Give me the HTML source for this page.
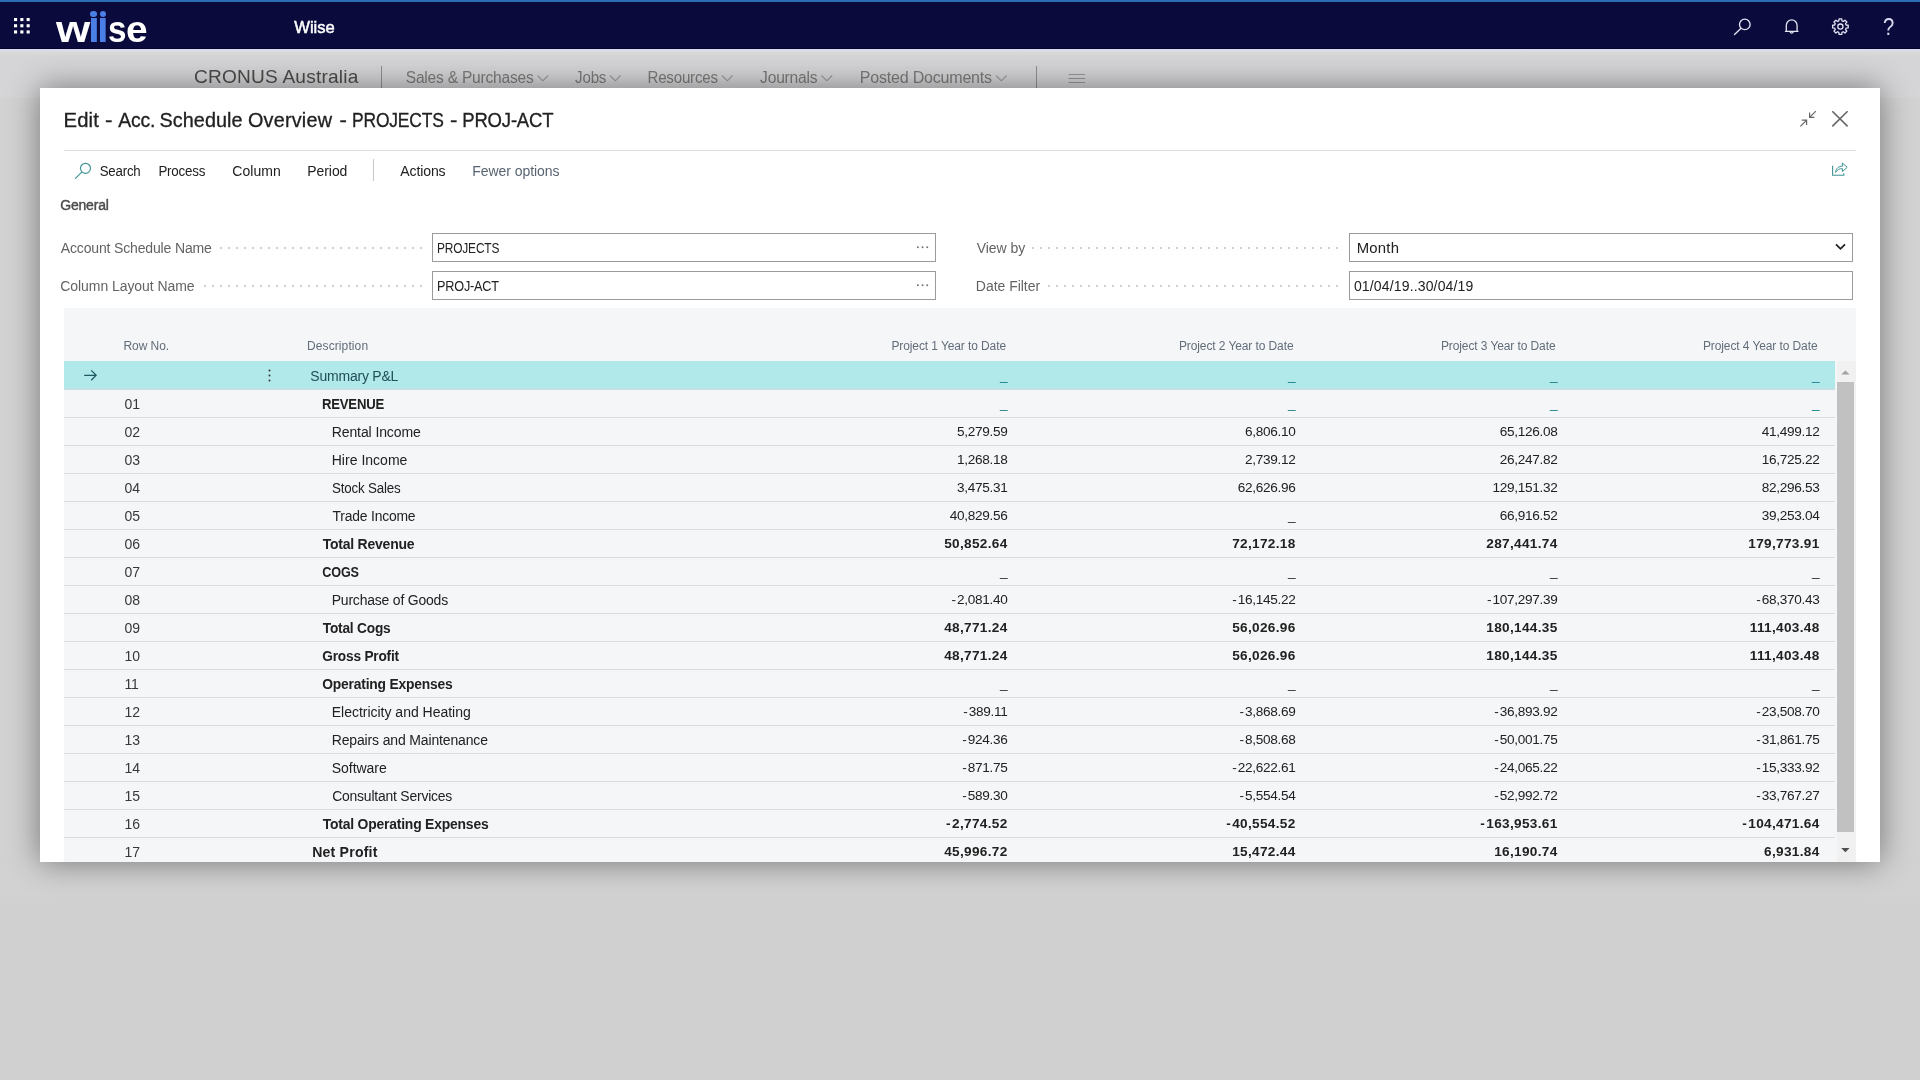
<!DOCTYPE html>
<html lang="en">
<head>
<meta charset="utf-8">
<title>Edit - Acc. Schedule Overview - PROJECTS - PROJ-ACT</title>
<style>
html,body{margin:0;padding:0;}
body{width:1920px;height:1080px;overflow:hidden;position:relative;background:#d0d0d0;font-family:"Liberation Sans",sans-serif;}
.t,.n{position:absolute;white-space:pre;line-height:1;transform-origin:0 0;font-family:"Liberation Sans",sans-serif;}
.n{font-size:13.6px;color:#212121;letter-spacing:-0.3px;text-align:right;}
.n.b{font-weight:700;letter-spacing:0.33px;}
.n.u{letter-spacing:0;}
.rn{left:124.6px;font-size:14px;color:#383838;letter-spacing:-0.25px;}
.n .h{letter-spacing:1.1px;}
.n.b .h{letter-spacing:1.4px;}
#topline{position:absolute;left:0;top:0;width:1920px;height:2px;background:#2c6db3;}
#topbar{position:absolute;left:0;top:2px;width:1920px;height:46px;background:#0a0a3c;}
#topbar-edge{position:absolute;left:0;top:48px;width:1920px;height:7px;background:linear-gradient(#03032b 0,#03032b 1px,#dadaea 1px,#dadaea 4px,#d9d9d5 4px,#d8d8d5 7px);}
#navbg{position:absolute;left:0;top:55px;width:1920px;height:43px;background:#d5d4d6;}
#chrome{position:absolute;left:0;top:0;width:1920px;height:100px;will-change:transform;}
#midbg{position:absolute;left:0;top:98px;width:1920px;height:799px;background:#d2d2d2;}
#logo span{position:absolute;top:11px;font-size:37px;font-weight:700;line-height:1;color:#fff;white-space:pre;transform-origin:0 0;}
#logo .lw{left:56px;transform:scaleX(1.19);}
#logo .li{left:88.1px;color:#4a7fe6;letter-spacing:-2.55px;transform:scale(1.15,1.185);transform-origin:0 31px;clip-path:inset(8.7px 0 0 0);}
#logo .ls{left:107.6px;transform:scaleX(.9);}
#logo .le{left:125.6px;transform:scaleX(1.05);}
#logo b{position:absolute;width:6.2px;height:6.2px;border-radius:50%;background:#4a7fe6;top:10.7px;}
.vsep{position:absolute;width:1px;background:#8f8f8f;}
svg{position:absolute;overflow:visible;}
#dialog{position:absolute;left:40px;top:88px;width:1840px;height:774px;background:#fff;box-shadow:0 0 30px rgba(0,0,0,.45);}
#clip{position:absolute;left:0;top:0;width:1840px;height:774px;overflow:hidden;}
#inner{will-change:transform;position:absolute;left:-40px;top:-88px;width:1920px;height:1080px;}
#divider{position:absolute;left:64px;top:150px;width:1792px;height:1px;background:#dcdcdc;}
.input{position:absolute;box-sizing:border-box;height:29px;width:504px;border:1px solid #9b9b9b;background:#fff;}
.dots{position:absolute;height:2px;background-image:radial-gradient(circle at 1px 1px,#d0d0d0 0.85px,rgba(208,208,208,0) 1.3px);background-size:8px 2px;background-repeat:repeat-x;background-position:left top;}
#grid{position:absolute;left:64px;top:308px;width:1792px;height:560px;background:#f5f6f8;}
.row{position:absolute;left:64px;width:1771px;height:29px;box-sizing:border-box;border-bottom:1px solid #d9dcde;}
.row.sel{background:#b1e8ea;border-bottom:2px solid #c4e0e4;}
#sbtrack{position:absolute;left:1837px;top:361px;width:19px;height:501px;background:#f1f1f1;}
#sbthumb{position:absolute;left:1837px;top:382px;width:17px;height:450px;background:#c1c1c1;}
</style>
</head>
<body>
<div id="topline"></div>
<div id="topbar"></div>
<div id="topbar-edge"></div>
<div id="navbg"></div>
<div id="midbg"></div>

<div id="chrome">
<!-- app launcher -->
<svg style="left:14px;top:18.4px" width="16" height="16" viewBox="0 0 16 16" fill="#fff">
<rect x="0" y="0" width="3.1" height="3.1"/><rect x="6.3" y="0" width="3.1" height="3.1"/><rect x="12.6" y="0" width="3.1" height="3.1"/>
<rect x="0" y="6.2" width="3.1" height="3.1"/><rect x="6.3" y="6.2" width="3.1" height="3.1"/><rect x="12.6" y="6.2" width="3.1" height="3.1"/>
<rect x="0" y="12.4" width="3.1" height="3.1"/><rect x="6.3" y="12.4" width="3.1" height="3.1"/><rect x="12.6" y="12.4" width="3.1" height="3.1"/>
</svg>
<div id="logo"><span class="lw">w</span><span class="li">ii</span><span class="ls">s</span><span class="le">e</span><b style="left:90.4px"></b><b style="left:99.6px"></b></div>

<!-- top-right icons -->
<svg style="left:0;top:0" width="1920" height="50" viewBox="0 0 1920 50" fill="none" stroke="#e4e4f4" stroke-width="1.35" stroke-linecap="round" stroke-linejoin="round">
<circle cx="1744.8" cy="24.4" r="5.3"/><path d="M1740.8 28.4 L1734.5 34.5"/>
<path d="M1786.3 31.2 V25.6 a5.4 5.7 0 0 1 10.8 0 V31.2 M1785.4 31.3 H1798 M1790.2 32 a1.6 1.6 0 0 0 3 0" stroke-width="1.3"/>
<circle cx="1840.4" cy="26.6" r="2.6" stroke-width="1.3"/>
<path stroke-width="1.3" d="M1846.09 25.03 L1848.19 25.26 L1848.19 27.94 L1846.09 28.17 L1845.53 29.51 L1846.85 31.16 L1844.96 33.05 L1843.31 31.73 L1841.97 32.29 L1841.74 34.39 L1839.06 34.39 L1838.83 32.29 L1837.49 31.73 L1835.84 33.05 L1833.95 31.16 L1835.27 29.51 L1834.71 28.17 L1832.61 27.94 L1832.61 25.26 L1834.71 25.03 L1835.27 23.69 L1833.95 22.04 L1835.84 20.15 L1837.49 21.47 L1838.83 20.91 L1839.06 18.81 L1841.74 18.81 L1841.97 20.91 L1843.31 21.47 L1844.96 20.15 L1846.85 22.04 L1845.53 23.69 Z"/>
</svg>
<span class="t" style="left:1883.4px;top:16px;font-size:23px;color:#dcdcf0;transform:scaleX(.88);transform-origin:0 0">?</span>

<span class="t" style="left:294px;top:19px;font-size:16.5px;color:#ffffff;letter-spacing:-0.032px;transform:translateX(0.26px) scaleX(1.0055);-webkit-text-stroke:0.5px #fff;">Wiise</span>
<span class="t" style="left:194px;top:68px;font-size:18.4px;color:#4c4c4c;letter-spacing:0.200px;transform:translateX(0.00px) scaleX(1.0380);">CRONUS Australia</span>
<span class="t" style="left:405px;top:70px;font-size:16px;color:#7b7b7b;letter-spacing:-0.200px;transform:translateX(0.73px) scaleX(0.9694);">Sales &amp; Purchases</span>
<span class="t" style="left:575px;top:70px;font-size:16px;color:#7b7b7b;letter-spacing:-0.200px;transform:translateX(0.10px) scaleX(0.9431);">Jobs</span>
<span class="t" style="left:647px;top:70px;font-size:16px;color:#7b7b7b;letter-spacing:-0.200px;transform:translateX(0.45px) scaleX(0.9426);">Resources</span>
<span class="t" style="left:760px;top:70px;font-size:16px;color:#7b7b7b;letter-spacing:-0.200px;transform:translateX(0.09px) scaleX(0.9737);">Journals</span>
<span class="t" style="left:859px;top:70px;font-size:16px;color:#7b7b7b;letter-spacing:-0.192px;transform:translateX(0.77px) scaleX(0.9999);">Posted Documents</span>
<div class="vsep" style="left:381px;top:66px;height:24px"></div>
<div class="vsep" style="left:1036px;top:66px;height:24px"></div>
<svg style="left:0;top:50px" width="1920" height="48" viewBox="0 50 1920 48" fill="none" stroke="#9a9a9a" stroke-width="1.1">
<path d="M537.5 75.5 l5.3 5.3 l5.3 -5.3 M610 75.5 l5.3 5.3 l5.3 -5.3 M722 75.5 l5.3 5.3 l5.3 -5.3 M821.5 75.5 l5.3 5.3 l5.3 -5.3 M996 75.5 l5.3 5.3 l5.3 -5.3"/>
<path d="M1068.5 74.5 h16.5 M1068.5 78.5 h16.5 M1068.5 82.5 h16.5" stroke="#969696" stroke-width="1"/>
</svg>

</div>
<div id="dialog"><div id="clip"><div id="inner">
<div id="divider"></div>
<div class="input" style="left:432px;top:233px"></div>
<div class="input" style="left:432px;top:271px"></div>
<div class="input" style="left:1349px;top:233px"></div>
<div class="input" style="left:1349px;top:271px"></div>

<div class="dots" style="left:219.9px;top:246.7px;width:202px"></div>
<div class="dots" style="left:204px;top:284.7px;width:218px"></div>
<div class="dots" style="left:1032.4px;top:246.7px;width:306px"></div>
<div class="dots" style="left:1048.4px;top:284.7px;width:290px"></div>
<!-- dialog window buttons -->
<svg style="left:0;top:0" width="1920" height="320" viewBox="0 0 1920 320" fill="none" stroke="#666" stroke-width="1.4">
<path d="M1832.3 111.2 L1847.6 126.4 M1847.6 111.2 L1832.3 126.4" stroke-width="1.6"/>
<path d="M1815.8 111.2 L1809.6 117.4 M1809.6 112.6 V117.4 H1814.4 M1800.4 126.4 L1806.6 120.2 M1806.6 125 V120.2 H1801.8" stroke-width="1.2"/>
<!-- share -->
<path d="M1832.6 165.8 V175.3 H1843.8 V173.2" stroke="#3f9394" stroke-width="1.1"/>
<path d="M1835.6 172.4 C1836 168 1839 166.2 1842.4 166.2 V163 L1847.2 167.4 L1842.4 171.6 V168.6 C1839.6 168.6 1837.4 169.4 1835.6 172.4 Z" stroke="#3f9394" stroke-width="1" stroke-linejoin="round"/>
<!-- action bar search -->
<circle cx="85.5" cy="168.3" r="5" stroke="#3f9394" stroke-width="1.15"/><path d="M81.7 172.1 L75.5 178.3" stroke="#3f9394" stroke-width="1.15" stroke-linecap="round"/>
<!-- lookups ... -->
<g fill="#707070" stroke="none"><rect x="917" y="246.4" width="1.7" height="1.7"/><rect x="921.7" y="246.4" width="1.7" height="1.7"/><rect x="926.4" y="246.4" width="1.7" height="1.7"/><rect x="917" y="284.4" width="1.7" height="1.7"/><rect x="921.7" y="284.4" width="1.7" height="1.7"/><rect x="926.4" y="284.4" width="1.7" height="1.7"/></g>
<!-- select chevron -->
<path d="M1836 244.3 L1840.5 248.8 L1845 244.3" stroke="#222" stroke-width="1.8"/>
</svg>
<div class="vsep" style="left:373px;top:159px;height:22px;background:#c8c8c8"></div>

<div id="grid"></div>
<div class="row sel" style="top:361px"></div>
<div class="row" style="top:389px"></div>
<div class="row" style="top:417px"></div>
<div class="row" style="top:445px"></div>
<div class="row" style="top:473px"></div>
<div class="row" style="top:501px"></div>
<div class="row" style="top:529px"></div>
<div class="row" style="top:557px"></div>
<div class="row" style="top:585px"></div>
<div class="row" style="top:613px"></div>
<div class="row" style="top:641px"></div>
<div class="row" style="top:669px"></div>
<div class="row" style="top:697px"></div>
<div class="row" style="top:725px"></div>
<div class="row" style="top:753px"></div>
<div class="row" style="top:781px"></div>
<div class="row" style="top:809px"></div>
<div class="row" style="top:837px"></div>
<div id="sbtrack"></div><div id="sbthumb"></div>
<svg style="left:0;top:360px" width="1920" height="510" viewBox="0 360 1920 510" stroke="none">
<path d="M1841.2 374.6 L1845.4 370.4 L1849.6 374.6 Z" fill="#a3a3a3"/>
<path d="M1841.2 848 L1845.4 852.2 L1849.6 848 Z" fill="#505050"/>
<!-- current row arrow -->
<path d="M84.2 375.3 H96 M91.2 370.4 L96.2 375.3 L91.2 380.2" fill="none" stroke="#1d5a63" stroke-width="1.2"/>
<!-- row menu -->
<g fill="#333"><circle cx="269.5" cy="370.6" r="1"/><circle cx="269.5" cy="375.6" r="1"/><circle cx="269.5" cy="380.6" r="1"/></g>
</svg>
<span class="t" style="left:63px;top:111px;font-size:19.8px;color:#212121;letter-spacing:0.200px;transform:translateX(0.44px) scaleX(1.0232);-webkit-text-stroke:0.3px #212121;">Edit</span>
<span class="t" style="left:105px;top:111px;font-size:19.8px;color:#212121;transform:translateX(0.00px) scaleX(1.1411);-webkit-text-stroke:0.3px #212121;">-</span>
<span class="t" style="left:118px;top:111px;font-size:19.8px;color:#212121;letter-spacing:-0.200px;transform:translateX(0.27px) scaleX(0.9800);-webkit-text-stroke:0.3px #212121;">Acc.</span>
<span class="t" style="left:159px;top:111px;font-size:19.8px;color:#212121;letter-spacing:0.043px;transform:translateX(0.55px) scaleX(1.0015);-webkit-text-stroke:0.3px #212121;">Schedule</span>
<span class="t" style="left:247px;top:111px;font-size:19.8px;color:#212121;letter-spacing:0.210px;transform:translateX(0.89px) scaleX(1.0022);-webkit-text-stroke:0.3px #212121;">Overview</span>
<span class="t" style="left:339px;top:111px;font-size:19.8px;color:#212121;transform:translateX(0.60px) scaleX(1.1240);-webkit-text-stroke:0.3px #212121;">-</span>
<span class="t" style="left:352px;top:111px;font-size:19.8px;color:#212121;letter-spacing:-0.200px;transform:translateX(0.06px) scaleX(0.8808);-webkit-text-stroke:0.3px #212121;">PROJECTS</span>
<span class="t" style="left:450px;top:111px;font-size:19.8px;color:#212121;transform:translateX(0.00px) scaleX(1.1240);-webkit-text-stroke:0.3px #212121;">-</span>
<span class="t" style="left:462px;top:111px;font-size:19.8px;color:#212121;letter-spacing:-0.200px;transform:translateX(0.27px) scaleX(0.9358);-webkit-text-stroke:0.3px #212121;">PROJ-ACT</span>
<span class="t" style="left:99px;top:164px;font-size:14px;color:#212121;letter-spacing:-0.200px;transform:translateX(0.65px) scaleX(0.9464);">Search</span>
<span class="t" style="left:158px;top:164px;font-size:14px;color:#212121;letter-spacing:-0.200px;transform:translateX(0.38px) scaleX(0.9553);">Process</span>
<span class="t" style="left:232px;top:164px;font-size:14px;color:#212121;letter-spacing:0.078px;transform:translateX(0.24px) scaleX(1.0008);">Column</span>
<span class="t" style="left:307px;top:164px;font-size:14px;color:#212121;letter-spacing:-0.083px;transform:translateX(0.33px) scaleX(0.9993);">Period</span>
<span class="t" style="left:400px;top:164px;font-size:14px;color:#212121;letter-spacing:-0.117px;transform:translateX(0.26px) scaleX(1.0027);">Actions</span>
<span class="t" style="left:472px;top:164px;font-size:14px;color:#596472;letter-spacing:-0.065px;transform:translateX(0.32px) scaleX(0.9997);">Fewer options</span>
<span class="t" style="left:60px;top:198px;font-size:14px;color:#4a4a4a;letter-spacing:-0.192px;transform:translateX(0.25px) scaleX(0.9988);-webkit-text-stroke:0.4px #4a4a4a;">General</span>
<span class="t" style="left:60px;top:241px;font-size:14px;color:#636363;letter-spacing:-0.156px;transform:translateX(0.75px) scaleX(1.0008);">Account Schedule Name</span>
<span class="t" style="left:60px;top:279px;font-size:14px;color:#636363;letter-spacing:-0.050px;transform:translateX(0.24px) scaleX(0.9986);">Column Layout Name</span>
<span class="t" style="left:437px;top:241px;font-size:14px;color:#212121;letter-spacing:-0.200px;transform:translateX(0.00px) scaleX(0.8515);">PROJECTS</span>
<span class="t" style="left:436px;top:279px;font-size:14px;color:#212121;letter-spacing:-0.200px;transform:translateX(0.94px) scaleX(0.9062);">PROJ-ACT</span>
<span class="t" style="left:976px;top:241px;font-size:14px;color:#636363;letter-spacing:-0.042px;transform:translateX(0.72px) scaleX(0.9997);">View by</span>
<span class="t" style="left:975px;top:279px;font-size:14px;color:#636363;letter-spacing:-0.025px;transform:translateX(0.82px) scaleX(0.9996);">Date Filter</span>
<span class="t" style="left:1356px;top:241px;font-size:14px;color:#212121;letter-spacing:0.200px;transform:translateX(0.75px) scaleX(1.0632);">Month</span>
<span class="t" style="left:1353px;top:279px;font-size:14px;color:#212121;letter-spacing:0.153px;transform:translateX(0.90px) scaleX(1.0005);">01/04/19..30/04/19</span>
<span class="t" style="left:123px;top:340px;font-size:12px;color:#626d7a;letter-spacing:-0.079px;transform:translateX(0.50px) scaleX(1.0012);">Row No.</span>
<span class="t" style="left:307px;top:340px;font-size:12px;color:#626d7a;letter-spacing:0.101px;transform:translateX(0.00px) scaleX(1.0003);">Description</span>
<span class="t" style="left:891px;top:340px;font-size:12px;color:#626d7a;letter-spacing:-0.090px;transform:translateX(0.40px) scaleX(0.9987);">Project 1 Year to Date</span>
<span class="t" style="left:1178px;top:340px;font-size:12px;color:#626d7a;letter-spacing:-0.090px;transform:translateX(0.90px) scaleX(0.9987);">Project 2 Year to Date</span>
<span class="t" style="left:1440px;top:340px;font-size:12px;color:#626d7a;letter-spacing:-0.090px;transform:translateX(0.90px) scaleX(0.9987);">Project 3 Year to Date</span>
<span class="t" style="left:1702px;top:340px;font-size:12px;color:#626d7a;letter-spacing:-0.090px;transform:translateX(0.90px) scaleX(0.9987);">Project 4 Year to Date</span>
<span class="t" style="left:310px;top:369px;font-size:14px;color:#1f4f57;letter-spacing:-0.215px;transform:translateX(0.35px) scaleX(0.9992);">Summary P&amp;L</span>
<span class="t" style="left:321px;top:397px;font-size:14px;font-weight:700;color:#212121;letter-spacing:-0.200px;transform:translateX(0.90px) scaleX(0.9387);">REVENUE</span>
<span class="t" style="left:331px;top:425px;font-size:14px;color:#212121;letter-spacing:-0.112px;transform:translateX(0.72px) scaleX(1.0020);">Rental Income</span>
<span class="t" style="left:331px;top:453px;font-size:14px;color:#212121;letter-spacing:0.012px;transform:translateX(0.72px) scaleX(1.0013);">Hire Income</span>
<span class="t" style="left:332px;top:481px;font-size:14px;color:#212121;letter-spacing:-0.200px;transform:translateX(0.05px) scaleX(0.9527);">Stock Sales</span>
<span class="t" style="left:332px;top:509px;font-size:14px;color:#212121;letter-spacing:-0.200px;transform:translateX(0.57px) scaleX(0.9920);">Trade Income</span>
<span class="t" style="left:322px;top:537px;font-size:14px;font-weight:700;color:#212121;letter-spacing:-0.225px;transform:translateX(0.73px) scaleX(0.9985);">Total Revenue</span>
<span class="t" style="left:322px;top:565px;font-size:14px;font-weight:700;color:#212121;letter-spacing:-0.200px;transform:translateX(0.32px) scaleX(0.9012);">COGS</span>
<span class="t" style="left:331px;top:593px;font-size:14px;color:#212121;letter-spacing:-0.202px;transform:translateX(0.73px) scaleX(0.9983);">Purchase of Goods</span>
<span class="t" style="left:322px;top:621px;font-size:14px;font-weight:700;color:#212121;letter-spacing:-0.200px;transform:translateX(0.73px) scaleX(0.9774);">Total Cogs</span>
<span class="t" style="left:322px;top:649px;font-size:14px;font-weight:700;color:#212121;letter-spacing:-0.200px;transform:translateX(0.26px) scaleX(0.9767);">Gross Profit</span>
<span class="t" style="left:322px;top:677px;font-size:14px;font-weight:700;color:#212121;letter-spacing:-0.200px;transform:translateX(0.26px) scaleX(0.9873);">Operating Expenses</span>
<span class="t" style="left:331px;top:705px;font-size:14px;color:#212121;letter-spacing:-0.017px;transform:translateX(0.72px) scaleX(1.0009);">Electricity and Heating</span>
<span class="t" style="left:331px;top:733px;font-size:14px;color:#212121;letter-spacing:-0.149px;transform:translateX(0.73px) scaleX(0.9995);">Repairs and Maintenance</span>
<span class="t" style="left:331px;top:761px;font-size:14px;color:#212121;letter-spacing:-0.052px;transform:translateX(0.75px) scaleX(1.0020);">Software</span>
<span class="t" style="left:332px;top:789px;font-size:14px;color:#212121;letter-spacing:-0.200px;transform:translateX(0.15px) scaleX(0.9939);">Consultant Services</span>
<span class="t" style="left:322px;top:817px;font-size:14px;font-weight:700;color:#212121;letter-spacing:-0.200px;transform:translateX(0.73px) scaleX(0.9931);">Total Operating Expenses</span>
<span class="t" style="left:312px;top:845px;font-size:14px;font-weight:700;color:#212121;letter-spacing:0.200px;transform:translateX(0.20px) scaleX(1.0062);">Net Profit</span>
<span class="n u" style="right:912.40px;top:369px;color:#0b7a80">_</span>
<span class="n u" style="right:624.40px;top:369px;color:#0b7a80">_</span>
<span class="n u" style="right:362.40px;top:369px;color:#0b7a80">_</span>
<span class="n u" style="right:100.40px;top:369px;color:#0b7a80">_</span>
<span class="n u" style="right:912.40px;top:397px;color:#0b7a80">_</span>
<span class="n u" style="right:624.40px;top:397px;color:#0b7a80">_</span>
<span class="n u" style="right:362.40px;top:397px;color:#0b7a80">_</span>
<span class="n u" style="right:100.40px;top:397px;color:#0b7a80">_</span>
<span class="n" style="right:912.40px;top:425px">5,279.59</span>
<span class="n" style="right:624.40px;top:425px">6,806.10</span>
<span class="n" style="right:362.40px;top:425px">65,126.08</span>
<span class="n" style="right:100.40px;top:425px">41,499.12</span>
<span class="n" style="right:912.40px;top:453px">1,268.18</span>
<span class="n" style="right:624.40px;top:453px">2,739.12</span>
<span class="n" style="right:362.40px;top:453px">26,247.82</span>
<span class="n" style="right:100.40px;top:453px">16,725.22</span>
<span class="n" style="right:912.40px;top:481px">3,475.31</span>
<span class="n" style="right:624.40px;top:481px">62,626.96</span>
<span class="n" style="right:362.40px;top:481px">129,151.32</span>
<span class="n" style="right:100.40px;top:481px">82,296.53</span>
<span class="n" style="right:912.40px;top:509px">40,829.56</span>
<span class="n u" style="right:624.40px;top:509px;color:#212121">_</span>
<span class="n" style="right:362.40px;top:509px">66,916.52</span>
<span class="n" style="right:100.40px;top:509px">39,253.04</span>
<span class="n b" style="right:912.40px;top:537px">50,852.64</span>
<span class="n b" style="right:624.40px;top:537px">72,172.18</span>
<span class="n b" style="right:362.40px;top:537px">287,441.74</span>
<span class="n b" style="right:100.40px;top:537px">179,773.91</span>
<span class="n u" style="right:912.40px;top:565px;color:#212121">_</span>
<span class="n u" style="right:624.40px;top:565px;color:#212121">_</span>
<span class="n u" style="right:362.40px;top:565px;color:#212121">_</span>
<span class="n u" style="right:100.40px;top:565px;color:#212121">_</span>
<span class="n" style="right:912.40px;top:593px"><span class="h">-</span>2,081.40</span>
<span class="n" style="right:624.40px;top:593px"><span class="h">-</span>16,145.22</span>
<span class="n" style="right:362.40px;top:593px"><span class="h">-</span>107,297.39</span>
<span class="n" style="right:100.40px;top:593px"><span class="h">-</span>68,370.43</span>
<span class="n b" style="right:912.40px;top:621px">48,771.24</span>
<span class="n b" style="right:624.40px;top:621px">56,026.96</span>
<span class="n b" style="right:362.40px;top:621px">180,144.35</span>
<span class="n b" style="right:100.40px;top:621px">111,403.48</span>
<span class="n b" style="right:912.40px;top:649px">48,771.24</span>
<span class="n b" style="right:624.40px;top:649px">56,026.96</span>
<span class="n b" style="right:362.40px;top:649px">180,144.35</span>
<span class="n b" style="right:100.40px;top:649px">111,403.48</span>
<span class="n u" style="right:912.40px;top:677px;color:#212121">_</span>
<span class="n u" style="right:624.40px;top:677px;color:#212121">_</span>
<span class="n u" style="right:362.40px;top:677px;color:#212121">_</span>
<span class="n u" style="right:100.40px;top:677px;color:#212121">_</span>
<span class="n" style="right:912.40px;top:705px"><span class="h">-</span>389.11</span>
<span class="n" style="right:624.40px;top:705px"><span class="h">-</span>3,868.69</span>
<span class="n" style="right:362.40px;top:705px"><span class="h">-</span>36,893.92</span>
<span class="n" style="right:100.40px;top:705px"><span class="h">-</span>23,508.70</span>
<span class="n" style="right:912.40px;top:733px"><span class="h">-</span>924.36</span>
<span class="n" style="right:624.40px;top:733px"><span class="h">-</span>8,508.68</span>
<span class="n" style="right:362.40px;top:733px"><span class="h">-</span>50,001.75</span>
<span class="n" style="right:100.40px;top:733px"><span class="h">-</span>31,861.75</span>
<span class="n" style="right:912.40px;top:761px"><span class="h">-</span>871.75</span>
<span class="n" style="right:624.40px;top:761px"><span class="h">-</span>22,622.61</span>
<span class="n" style="right:362.40px;top:761px"><span class="h">-</span>24,065.22</span>
<span class="n" style="right:100.40px;top:761px"><span class="h">-</span>15,333.92</span>
<span class="n" style="right:912.40px;top:789px"><span class="h">-</span>589.30</span>
<span class="n" style="right:624.40px;top:789px"><span class="h">-</span>5,554.54</span>
<span class="n" style="right:362.40px;top:789px"><span class="h">-</span>52,992.72</span>
<span class="n" style="right:100.40px;top:789px"><span class="h">-</span>33,767.27</span>
<span class="n b" style="right:912.40px;top:817px"><span class="h">-</span>2,774.52</span>
<span class="n b" style="right:624.40px;top:817px"><span class="h">-</span>40,554.52</span>
<span class="n b" style="right:362.40px;top:817px"><span class="h">-</span>163,953.61</span>
<span class="n b" style="right:100.40px;top:817px"><span class="h">-</span>104,471.64</span>
<span class="n b" style="right:912.40px;top:845px">45,996.72</span>
<span class="n b" style="right:624.40px;top:845px">15,472.44</span>
<span class="n b" style="right:362.40px;top:845px">16,190.74</span>
<span class="n b" style="right:100.40px;top:845px">6,931.84</span>
<span class="t rn" style="top:397px">01</span>
<span class="t rn" style="top:425px">02</span>
<span class="t rn" style="top:453px">03</span>
<span class="t rn" style="top:481px">04</span>
<span class="t rn" style="top:509px">05</span>
<span class="t rn" style="top:537px">06</span>
<span class="t rn" style="top:565px">07</span>
<span class="t rn" style="top:593px">08</span>
<span class="t rn" style="top:621px">09</span>
<span class="t rn" style="top:649px">10</span>
<span class="t rn" style="top:677px">11</span>
<span class="t rn" style="top:705px">12</span>
<span class="t rn" style="top:733px">13</span>
<span class="t rn" style="top:761px">14</span>
<span class="t rn" style="top:789px">15</span>
<span class="t rn" style="top:817px">16</span>
<span class="t rn" style="top:845px">17</span>
</div></div></div>
</body>
</html>
